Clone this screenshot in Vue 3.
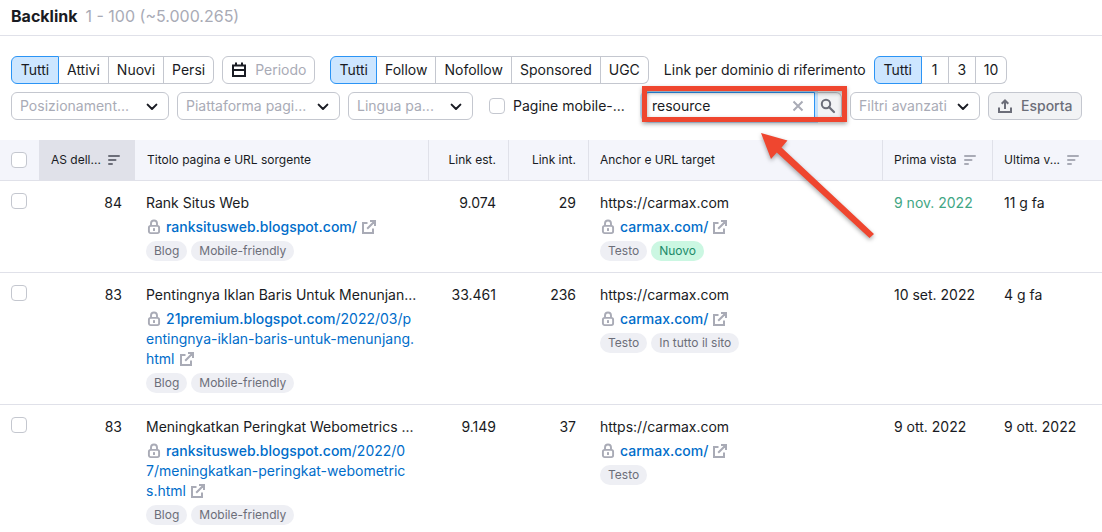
<script setup>
import { ref } from 'vue'

const groups = {
  status: ['Tutti', 'Attivi', 'Nuovi', 'Persi'],
  follow: ['Tutti', 'Follow', 'Nofollow', 'Sponsored', 'UGC'],
  perDomain: ['Tutti', '1', '3', '10'],
}
const active = ref({ status: 'Tutti', follow: 'Tutti', perDomain: 'Tutti' })
const query = ref('resource')

const rows = [
  {
    score: '84', title: 'Rank Situs Web', host: 'ranksitusweb.blogspot.com/', path: [],
    tags: ['Blog', 'Mobile-friendly'], ext: '9.074', int: '29',
    targetTags: ['Testo', 'Nuovo'], first: '9 nov. 2022', fresh: true, last: '11 g fa',
  },
  {
    score: '83', title: 'Pentingnya Iklan Baris Untuk Menunjan...', host: '21premium.blogspot.com',
    path: ['/2022/03/p', 'entingnya-iklan-baris-untuk-menunjang.', 'html'],
    tags: ['Blog', 'Mobile-friendly'], ext: '33.461', int: '236',
    targetTags: ['Testo', 'In tutto il sito'], first: '10 set. 2022', last: '4 g fa',
  },
  {
    score: '83', title: 'Meningkatkan Peringkat Webometrics ...', host: 'ranksitusweb.blogspot.com',
    path: ['/2022/0', '7/meningkatkan-peringkat-webometric', 's.html'],
    tags: ['Blog', 'Mobile-friendly'], ext: '9.149', int: '37',
    targetTags: ['Testo'], first: '9 ott. 2022', last: '9 ott. 2022',
  },
]
</script>

<template>
  <main class="page">
    <svg class="defs" aria-hidden="true">
      <symbol id="chevron" viewBox="0 0 12 8"><path d="M1.600 1.600 6 6l4.400-4.400" fill="none" stroke="currentColor" stroke-width="2" stroke-linecap="round" stroke-linejoin="round" /></symbol>
      <symbol id="lock" viewBox="0 0 14 16"><path d="M4 7V4.500a3 3 0 0 1 6 0V7" fill="none" stroke="currentColor" stroke-width="1.900" /><rect x="1.900" y="6.900" width="10.200" height="7.200" rx="1.800" fill="none" stroke="currentColor" stroke-width="1.900" /><rect x="6" y="9" width="2" height="3" rx=".6" fill="currentColor" /></symbol>
      <symbol id="external" viewBox="0 0 14 14"><path d="M5.500 3H1v10h10V8.500M8 1h5v5M12.700 1.300 5.200 8.800" fill="none" stroke="currentColor" stroke-width="2" /></symbol>
      <symbol id="sort" viewBox="0 0 12 10"><path d="M1 1h10M1 5h6.500M1 9h3" fill="none" stroke="currentColor" stroke-width="2" stroke-linecap="round" /></symbol>
    </svg>

    <header class="heading">
      <h1>Backlink</h1>
      <span>1 - 100 (~5.000.265)</span>
    </header>

    <section class="filters">
      <div class="line">
        <div class="pills" role="group" aria-label="Stato">
          <button v-for="o in groups.status" :key="o" :class="{ on: active.status === o }" @click="active.status = o">{{ o }}</button>
        </div>
        <button class="period">
          <svg width="14" height="16" viewBox="0 0 14 16"><path d="M1 3.500h12V14H1zM1 8h12M4 .5v3M10 .5v3" fill="none" stroke="currentColor" stroke-width="2" /></svg>
          Periodo
        </button>
        <div class="pills second" role="group" aria-label="Tipo di link">
          <button v-for="o in groups.follow" :key="o" :class="{ on: active.follow === o }" @click="active.follow = o">{{ o }}</button>
        </div>
        <span class="caption" id="per-domain">Link per dominio di riferimento</span>
        <div class="pills" role="group" aria-labelledby="per-domain">
          <button v-for="o in groups.perDomain" :key="o" :class="{ on: active.perDomain === o }" @click="active.perDomain = o">{{ o }}</button>
        </div>
      </div>

      <div class="line">
        <div class="drop placement">
          <select aria-label="Posizionamento"><option>Posizionament...</option></select>
          <svg width="12" height="8"><use href="#chevron" /></svg>
        </div>
        <div class="drop platform">
          <select aria-label="Piattaforma pagina"><option>Piattaforma pagi...</option></select>
          <svg width="12" height="8"><use href="#chevron" /></svg>
        </div>
        <div class="drop language">
          <select aria-label="Lingua pagina"><option>Lingua pa...</option></select>
          <svg width="12" height="8"><use href="#chevron" /></svg>
        </div>
        <label class="mobile"><input type="checkbox" />Pagine mobile-...</label>
        <div class="search">
          <input v-model="query" type="text" aria-label="Cerca" />
          <button class="clear" aria-label="Cancella" @click="query = ''">
            <svg width="12" height="12" viewBox="0 0 12 12"><path d="m1.500 1.500 9 9m0-9-9 9" stroke="currentColor" stroke-width="2" /></svg>
          </button>
          <button class="go" aria-label="Avvia ricerca">
            <svg width="16" height="16" viewBox="0 0 16 16"><circle cx="6" cy="6" r="4.200" fill="none" stroke="currentColor" stroke-width="2" /><path d="m9 9 5 5" stroke="currentColor" stroke-width="2.200" stroke-linecap="round" /></svg>
          </button>
          <span class="marker"></span>
          <svg class="arrow" width="124" height="116" viewBox="0 0 124 116"><path d="m6 5 26.500 7.500-6 7L119 106l-4.500 4-92.700-85.500L16 31z" fill="#ef462f" /></svg>
        </div>
        <div class="drop advanced">
          <select aria-label="Filtri avanzati"><option>Filtri avanzati</option></select>
          <svg width="12" height="8"><use href="#chevron" /></svg>
        </div>
        <button class="export">
          <svg width="14" height="14" viewBox="0 0 14 14"><path d="M1 8.500V13h12V8.500M7 10V2M3.700 4.800 7 1.500l3.300 3.300" fill="none" stroke="currentColor" stroke-width="2" /></svg>
          Esporta
        </button>
      </div>
    </section>

    <table>
      <colgroup>
        <col class="c-check" /><col class="c-score" /><col /><col class="c-num" /><col class="c-num" /><col /><col class="c-date" /><col class="c-date" />
      </colgroup>
      <thead>
        <tr>
          <th class="check"><input type="checkbox" aria-label="Seleziona tutto" /></th>
          <th class="sorted"><span class="head">AS dell...<svg width="12" height="10"><use href="#sort" /></svg></span></th>
          <th class="after-sorted">Titolo pagina e URL sorgente</th>
          <th class="split num">Link est.</th>
          <th class="split num">Link int.</th>
          <th class="split">Anchor e URL target</th>
          <th class="split"><span class="head">Prima vista<svg width="12" height="10"><use href="#sort" /></svg></span></th>
          <th class="split"><span class="head">Ultima v...<svg width="12" height="10"><use href="#sort" /></svg></span></th>
        </tr>
      </thead>
      <tbody>
        <tr v-for="(r, i) in rows" :key="i">
          <td class="check"><input type="checkbox" :aria-label="r.title" /></td>
          <td class="num">{{ r.score }}</td>
          <td>
            <div class="title">{{ r.title }}</div>
            <div class="url">
              <svg class="lock" width="14" height="16"><use href="#lock" /></svg><a href="#"><b>{{ r.host }}</b><template v-for="(p, j) in r.path" :key="j"><br v-if="j" />{{ p }}</template></a><svg class="ext" width="14" height="14"><use href="#external" /></svg>
            </div>
            <div class="tags"><span v-for="t in r.tags" :key="t">{{ t }}</span></div>
          </td>
          <td class="num">{{ r.ext }}</td>
          <td class="num">{{ r.int }}</td>
          <td>
            <div class="title">https://carmax.com</div>
            <div class="url">
              <svg class="lock" width="14" height="16"><use href="#lock" /></svg><a href="#"><b>carmax.com/</b></a><svg class="ext" width="14" height="14"><use href="#external" /></svg>
            </div>
            <div class="tags"><span v-for="t in r.targetTags" :key="t" :class="{ new: t === 'Nuovo' }">{{ t }}</span></div>
          </td>
          <td :class="{ fresh: r.fresh }">{{ r.first }}</td>
          <td>{{ r.last }}</td>
        </tr>
      </tbody>
    </table>
  </main>
</template>

<style>
body {
  background: #fff;
  overflow: hidden;
}
</style>

<style scoped>
.page {
  font: 14px/20px Inter, "Liberation Sans", sans-serif;
  color: #191b23;
}
.page * {
  box-sizing: border-box;
}
.defs {
  position: absolute;
  width: 0;
  height: 0;
}
button,
input,
select {
  font: inherit;
  color: inherit;
  margin: 0;
  outline: none;
}
svg {
  flex: none;
}
.heading {
  display: flex;
  align-items: center;
  gap: 8px;
  height: 36px;
  padding: 0 11px 4px;
  border-bottom: 1px solid #e0e1e9;
  font-size: 16px;
}
h1 {
  margin: 0;
  font-size: 16px;
  font-weight: 700;
}
.heading span {
  color: #a9abb6;
}
.filters {
  display: flex;
  flex-direction: column;
  gap: 8px;
  padding: 20px 11px;
}
.line {
  display: flex;
  align-items: center;
  gap: 8px;
  height: 28px;
  white-space: nowrap;
}
.pills {
  display: flex;
}
.pills button {
  height: 28px;
  min-width: 27px;
  padding: 0 8px;
  border: 1px solid #c4c7cf;
  border-left-width: 0;
  background: #fff;
}
.pills button:first-child {
  min-width: 48px;
  border-left-width: 1px;
  border-radius: 6px 0 0 6px;
}
.pills.second {
  margin-left: 7px;
}
.pills.second button:first-child {
  min-width: 46px;
}
.pills button:last-child {
  border-radius: 0 6px 6px 0;
}
.pills button.on {
  background: #cde6ff;
  border-color: #2b94f5;
}
.period,
.export {
  display: flex;
  align-items: center;
  gap: 9px;
  height: 28px;
  padding: 0 8px 0 9px;
  border: 1px solid #c4c7cf;
  border-radius: 6px;
  background: #fff;
  color: #a9abb6;
}
.period svg {
  color: #191b23;
}
.export {
  background: #f2f3f5;
  color: #6c6e79;
  font-weight: 500;
}
.caption {
  margin-left: 7px;
}
.drop {
  position: relative;
  flex: none;
}
.placement {
  width: 158px;
}
.platform {
  width: 163px;
}
.language {
  width: 125px;
}
.advanced {
  width: 130px;
}
.drop select {
  display: block;
  width: 100%;
  height: 28px;
  padding: 0 0 0 8px;
  border: 1px solid #c4c7cf;
  border-radius: 6px;
  background: #fff;
  color: #a9abb6;
  appearance: none;
}
.drop svg {
  position: absolute;
  right: 11px;
  top: 11px;
  pointer-events: none;
}
input[type="checkbox"] {
  appearance: none;
  display: block;
  width: 16px;
  height: 16px;
  border: 1px solid #c4c7cf;
  border-radius: 4px;
  background: #fff;
}
.mobile {
  display: flex;
  align-items: center;
  gap: 8px;
  width: 146px;
  margin-left: 8px;
}
.search {
  position: relative;
  display: flex;
  width: 199px;
  height: 28px;
}
.search input {
  flex: 1;
  min-width: 0;
  padding: 0 32px 0 8px;
  border: 1px solid #2b94f5;
  border-radius: 6px 0 0 6px;
  background: #fff;
  box-shadow: 0 0 0 3px #c3e0fb;
}
.clear {
  position: absolute;
  right: 38px;
  top: 8px;
  display: flex;
  padding: 0;
  border: 0;
  background: none;
  color: #a9abb6;
}
.go {
  display: flex;
  align-items: center;
  justify-content: center;
  width: 27px;
  padding: 0 4px 0 0;
  border: 1px solid #c4c7cf;
  border-left: 3px solid #c3e0fb;
  border-radius: 0 6px 6px 0;
  background: #f2f3f5;
  color: #6c6e79;
  z-index: 1;
}
.marker {
  position: absolute;
  inset: -6px -5px -2px -1px;
  border: 5px solid #ef462f;
  filter: drop-shadow(0 2px 2px rgb(0 0 0 / 35%));
  pointer-events: none;
  z-index: 2;
}
.arrow {
  position: absolute;
  left: 112px;
  top: 36px;
  filter: drop-shadow(0 2px 2px rgb(0 0 0 / 35%));
  pointer-events: none;
  z-index: 2;
}
table {
  width: 100%;
  table-layout: fixed;
  border-collapse: separate;
  border-spacing: 0;
}
.c-check {
  width: 39px;
}
.c-score {
  width: 95px;
}
.c-num {
  width: 80px;
}
.c-date {
  width: 110px;
}
th {
  height: 41px;
  padding: 0 12px;
  border-bottom: 1px solid #e0e1e9;
  background: #f4f5fb;
  font-size: 12px;
  font-weight: 400;
  text-align: left;
  white-space: nowrap;
}
th.sorted {
  background: #e0e1e9;
}
th.after-sorted {
  border-left: 1px solid #e0e1e9;
}
th.split {
  border-left: 1px solid #e0e1e9;
  padding-left: 11px;
}
.head {
  display: flex;
  align-items: center;
  gap: 7px;
}
.head svg {
  color: #a9abb6;
}
.sorted .head svg {
  color: #6c6e79;
}
td {
  padding: 12px 12px 11px;
  border-bottom: 1px solid #e0e1e9;
  vertical-align: top;
}
th.check,
td.check {
  padding-left: 11px;
  padding-right: 0;
}
th.num,
td.num {
  text-align: right;
}
.fresh {
  color: #3fa684;
}
.title {
  white-space: nowrap;
}
.url {
  margin: 4px 0;
  white-space: nowrap;
}
.url a {
  color: #006dca;
  text-decoration: none;
}
.url b {
  font-weight: 500;
}
.url svg {
  color: #a9abb6;
}
.lock {
  margin: 0 5px 0 1px;
  vertical-align: -3px;
}
.ext {
  margin-left: 5px;
  vertical-align: -2px;
}
.tags {
  display: flex;
  gap: 4px;
}
.tags span {
  padding: 0 8px;
  border-radius: 10px;
  background: #eeeff4;
  color: #6c6e79;
  font-size: 12px;
  white-space: nowrap;
}
.tags .new {
  background: #cbf7e2;
  color: #208a69;
}
</style>
